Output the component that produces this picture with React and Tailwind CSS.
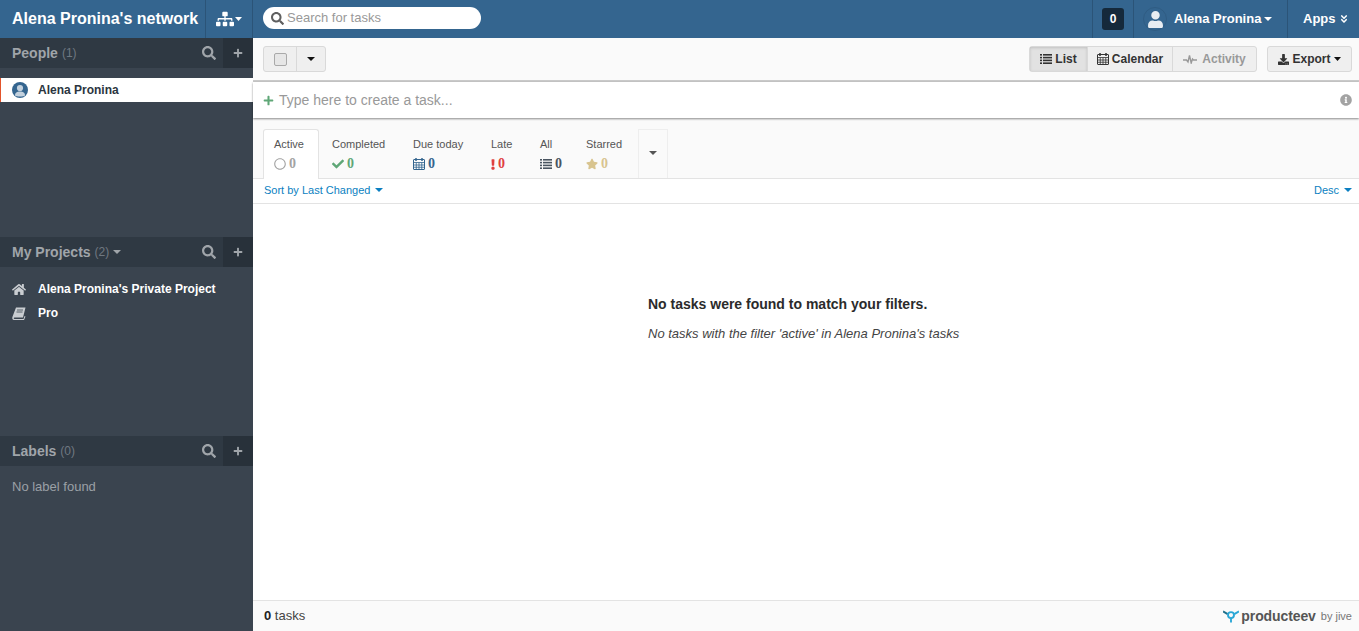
import { FaSitemap, FaSearch, FaPlus, FaUser, FaHome, FaDownload, FaInfoCircle, FaRegCircle, FaCheck, FaExclamation, FaStar, FaAngleDoubleDown } from 'react-icons/fa'

function Caret({ className }) {
  return (
    <svg viewBox="0 0 8 4" preserveAspectRatio="none" className={className} fill="currentColor">
      <polygon points="0,0 8,0 4,4" />
    </svg>
  )
}

function ListIcon({ className }) {
  return (
    <svg viewBox="0 0 12 10" className={className} fill="currentColor">
      <rect x="0" y="0" width="2" height="1.6" />
      <rect x="3" y="0" width="9" height="1.6" />
      <rect x="0" y="2.8" width="2" height="1.6" />
      <rect x="3" y="2.8" width="9" height="1.6" />
      <rect x="0" y="5.6" width="2" height="1.6" />
      <rect x="3" y="5.6" width="9" height="1.6" />
      <rect x="0" y="8.4" width="2" height="1.6" />
      <rect x="3" y="8.4" width="9" height="1.6" />
    </svg>
  )
}

function CalendarIcon({ className }) {
  return (
    <svg viewBox="0 0 12 12" className={className} fill="none" stroke="currentColor" strokeWidth="1">
      <rect x="0.5" y="1.5" width="11" height="10" rx="0.5" />
      <path d="M0.5 4.5H11.5M0.5 7H11.5M0.5 9.25H11.5M3.25 4.5V11.5M6 4.5V11.5M8.75 4.5V11.5" strokeWidth="0.8" />
      <path d="M3 0V3M9 0V3" strokeWidth="1.5" />
    </svg>
  )
}

function PulseIcon({ className }) {
  return (
    <svg viewBox="0 0 14 10" className={className} fill="none" stroke="currentColor" strokeWidth="1.4">
      <path d="M0 6H3.5L5 8L6.5 1.5L8.2 9L9.5 5L10.5 6H14" />
    </svg>
  )
}

function BookIcon({ className }) {
  return (
    <svg viewBox="0 0 14 13" className={className}>
      <path d="M4 0.5H13.5L11 10.5H2.5C1.5 10.5 1.5 12 2.5 12H11.5L12.5 9L13.5 9.5L12 13H2C0.4 13 0 11.5 0.4 10Z" fill="#c9cdd1" />
      <path d="M5 3H11M4.5 5H10.5" stroke="#3a444f" strokeWidth="0.8" />
    </svg>
  )
}

function PersonBadge() {
  return (
    <svg viewBox="0 0 16 16" className="mr-[10px] h-[16px] w-[16px]">
      <circle cx="8" cy="8" r="8" fill="#34658f" />
      <circle cx="8" cy="6" r="3.1" fill="#c3d1de" />
      <path d="M3 13.5C3 10.5 5 9.5 8 9.5S13 10.5 13 13.5C11.5 14.8 4.5 14.8 3 13.5Z" fill="#c3d1de" />
    </svg>
  )
}

const TABS = [
  { label: 'Active', icon: FaRegCircle, color: 'text-[#a3a3a3]', width: 'w-[56px]', size: 'h-[12px] w-[12px]' },
  { label: 'Completed', icon: FaCheck, color: 'text-[#5fa777]', width: 'w-[81px]', size: 'h-[12px] w-[12px]' },
  { label: 'Due today', icon: CalendarIcon, color: 'text-[#34658f]', width: 'w-[78px]', size: 'h-[12px] w-[12px]' },
  { label: 'Late', icon: FaExclamation, color: 'text-[#e0403f]', width: 'w-[49px]', size: 'h-[11px] w-[4px]' },
  { label: 'All', icon: ListIcon, color: 'text-[#4a5561]', width: 'w-[46px]', size: 'h-[10px] w-[12px]' },
  { label: 'Starred', icon: FaStar, color: 'text-[#d8c48f]', width: 'w-[53px]', size: 'h-[12px] w-[12px]' },
]

function SectionHeader({ title, count, caret }) {
  return (
    <div className="flex h-[30px] items-center bg-[#2f3943]">
      <div className="flex flex-1 items-center pl-3 text-[14px] font-bold text-[#a0a5aa]">
        {title}
        <span className="ml-[4px] text-[12px] font-normal text-[#6f7881]">({count})</span>
        {caret && <Caret className="ml-[4px] h-[4px] w-[8px] text-[#a0a5aa]" />}
      </div>
      <FaSearch className="mr-[7px] text-[14px] text-[#a0a5aa]" />
      <div className="flex h-full w-[30px] items-center justify-center bg-[#28313a]">
        <FaPlus className="text-[10px] text-[#a0a5aa]" />
      </div>
    </div>
  )
}

function Section({ children, ...rest }) {
  return (
    <div className="h-[199px]">
      <SectionHeader {...rest} />
      {children}
    </div>
  )
}

export default function App() {
  return (
    <div className="flex h-[631px] w-[1359px] flex-col overflow-hidden bg-white font-['Liberation_Sans',sans-serif]">
      {/* top bar */}
      <header className="flex h-[38px] shrink-0 items-center bg-[#34658f] text-white">
        <div className="flex h-full w-[206px] items-center border-r border-[#2b5478] pl-3 text-[16px] font-bold">Alena Pronina's network</div>
        <div className="flex h-full w-[47px] items-center justify-center border-r border-[#2b5478]">
          <FaSitemap className="text-[18px]" />
          <Caret className="ml-px h-[4px] w-[7px]" />
        </div>
        <div className="mb-[2px] ml-[10px] flex h-[22px] w-[218px] items-center rounded-full bg-white pl-2 text-[13px] text-[#999]">
          <FaSearch className="mr-[3px] text-[13px] text-[#5f5f5f]" />
          Search for tasks
        </div>
        <div className="ml-auto flex h-full items-center">
          <div className="flex h-full w-[41px] items-center justify-center border-l border-[#2b5478]">
            <div className="flex h-[22px] w-[22px] items-center justify-center rounded-[3px] bg-[#15293b] text-[12px] font-bold">0</div>
          </div>
          <div className="flex h-full w-[155px] items-center border-x border-[#2b5478] pl-[9px] text-[13px] font-bold">
            <div className="flex h-[24px] w-[24px] items-center justify-center rounded-full border border-[#2f5c83]">
              <FaUser className="text-[17px] text-[#e8edf2]" />
            </div>
            <span className="ml-[7px]">Alena Pronina</span>
            <Caret className="ml-[3px] h-[4px] w-[8px]" />
          </div>
          <div className="flex h-full w-[71px] items-center pl-[15px] text-[13px] font-bold">
            Apps
            <FaAngleDoubleDown className="ml-[3px] text-[10px]" />
          </div>
        </div>
      </header>

      <div className="flex min-h-0 flex-1">
        {/* sidebar */}
        <aside className="w-[253px] shrink-0 bg-[#3a444f]">
          <Section title="People" count="1">
            <div className="mt-[10px] flex h-[24px] items-center border-l border-[#e2532b] bg-white pl-[11px] text-[12px] font-bold text-[#2b3540]">
              <PersonBadge />
              Alena Pronina
            </div>
          </Section>
          <Section title="My Projects" count="2" caret>
            <div className="mt-[10px] flex h-[24px] items-center pl-3 text-[12px] font-bold text-white">
              <FaHome className="mr-[12px] w-[14px] text-[13px] text-[#c9cdd1]" />
              Alena Pronina's Private Project
            </div>
            <div className="flex h-[24px] items-center pl-3 text-[12px] font-bold text-white">
              <BookIcon className="mr-[12px] h-[13px] w-[14px]" />
              Pro
            </div>
          </Section>
          <Section title="Labels" count="0">
            <div className="mt-[13px] pl-3 text-[13px] leading-[16px] text-[#9aa0a6]">No label found</div>
          </Section>
        </aside>

        {/* main */}
        <main className="flex min-w-0 flex-1 flex-col">
          <div className="flex h-[44px] shrink-0 items-center border-b-2 border-[#c9c9c9] bg-[#fafafa] pl-[10px] pr-[7px]">
            <div className="flex h-[26px] w-[63px] items-center rounded-[3px] border border-[#d9d9d9] bg-[#efefef]">
              <div className="flex h-full w-[33px] items-center justify-center border-r border-[#d9d9d9]">
                <div className="h-[13px] w-[13px] rounded-[2px] border border-[#a9a9a9] bg-[#e6e6e6]" />
              </div>
              <Caret className="ml-[10px] h-[4px] w-[8px] text-[#111]" />
            </div>
            <div className="ml-auto flex h-[26px] items-center rounded-[3px] border border-[#d9d9d9] bg-[#efefef] text-[12px]">
              <div className="flex h-full w-[57px] items-center justify-center bg-[#e2e2e2] font-bold text-[#333] shadow-[inset_0_1px_3px_rgba(0,0,0,0.15)]">
                <ListIcon className="mr-[3px] h-[10px] w-[12px]" />List
              </div>
              <div className="flex h-full w-[86px] items-center justify-center border-x border-[#d9d9d9] font-bold text-[#333]">
                <CalendarIcon className="mr-[3px] h-[12px] w-[12px]" />Calendar
              </div>
              <div className="flex h-full w-[83px] items-center justify-center font-bold text-[#999]">
                <PulseIcon className="mr-[5px] h-[10px] w-[14px]" />Activity
              </div>
            </div>
            <div className="ml-[10px] flex h-[26px] w-[85px] items-center justify-center rounded-[3px] border border-[#d9d9d9] bg-[#efefef] text-[12px] font-bold text-[#333]">
              <FaDownload className="mr-[3px] text-[11px]" />Export
              <Caret className="ml-[3px] h-[4px] w-[7px] text-[#111]" />
            </div>
          </div>

          <div className="relative z-10 flex h-[36px] shrink-0 items-center bg-white pl-[10px] pr-[7px] text-[14px] text-[#999] shadow-[0_1px_2px_rgba(0,0,0,0.45)]">
            <FaPlus className="mr-[5px] text-[11px] text-[#5fa777]" />
            Type here to create a task...
            <FaInfoCircle className="ml-auto text-[12px] text-[#a3a3a3]" />
          </div>

          <div className="flex h-[61px] shrink-0 items-end border-b border-[#e3e3e3] bg-[#fafafa] pl-[10px]">
            {TABS.map((t, i) => (
              <div
                key={t.label}
                className={`${t.width} -mb-px h-[50px] shrink-0 text-[11px] text-[#555] ${i === 0 ? 'rounded-t-[3px] border border-b-0 border-[#e3e3e3] bg-white pl-[10px] pt-[8px]' : 'pl-[13px] pt-[9px]'}`}
              >
                <div className="leading-[13px]">{t.label}</div>
                <div className={`mt-[6px] flex items-center gap-[3px] font-['Liberation_Serif',serif] text-[14px] font-bold leading-[14px] ${t.color}`}>
                  <t.icon className={t.size} />0
                </div>
              </div>
            ))}
            <div className="ml-[12px] flex h-[49px] w-[30px] items-center justify-center border-x border-t border-[#eeeeee] pb-[2px]">
              <Caret className="h-[4px] w-[8px] text-[#555]" />
            </div>
          </div>

          <div className="flex h-[25px] shrink-0 items-center justify-between border-b border-[#e3e3e3] pb-[2px] pl-[11px] pr-[7px] text-[11px] text-[#0b7fc1]">
            <span className="flex items-center">Sort by Last Changed<Caret className="ml-[5px] h-[4px] w-[8px]" /></span>
            <span className="flex items-center">Desc<Caret className="ml-[5px] h-[4px] w-[8px]" /></span>
          </div>

          <div className="flex-1 pl-[395px] pt-[91px]">
            <p className="text-[14px] font-bold leading-[18px] text-[#2b2b2b]">No tasks were found to match your filters.</p>
            <p className="mt-[13px] text-[13px] italic leading-[16px] text-[#444]">No tasks with the filter 'active' in Alena Pronina's tasks</p>
          </div>

          <footer className="flex h-[31px] shrink-0 items-center justify-between border-t border-[#e3e3e3] bg-[#fafafa] pl-[11px] pr-[7px] text-[13px] text-[#444]">
            <span><b className="text-[#222]">0</b> tasks</span>
            <span className="flex items-center">
              <svg width="16" height="15" viewBox="0 0 17 15" className="mr-[2px]" fill="none" strokeWidth="2">
                <path d="M0 2 L5 5" stroke="#1f6f8b" />
                <path d="M17 2 L12 5" stroke="#2aa7d6" />
                <circle cx="8.5" cy="6" r="3.2" stroke="#2aa7d6" />
                <path d="M8.5 9 V14" stroke="#2aa7d6" />
              </svg>
              <span className="text-[14px] font-bold tracking-[-0.1px] text-[#555]">producteev</span>
              <span className="ml-[5px] text-[11px] text-[#777]">by jive</span>
            </span>
          </footer>
        </main>
      </div>
    </div>
  )
}
